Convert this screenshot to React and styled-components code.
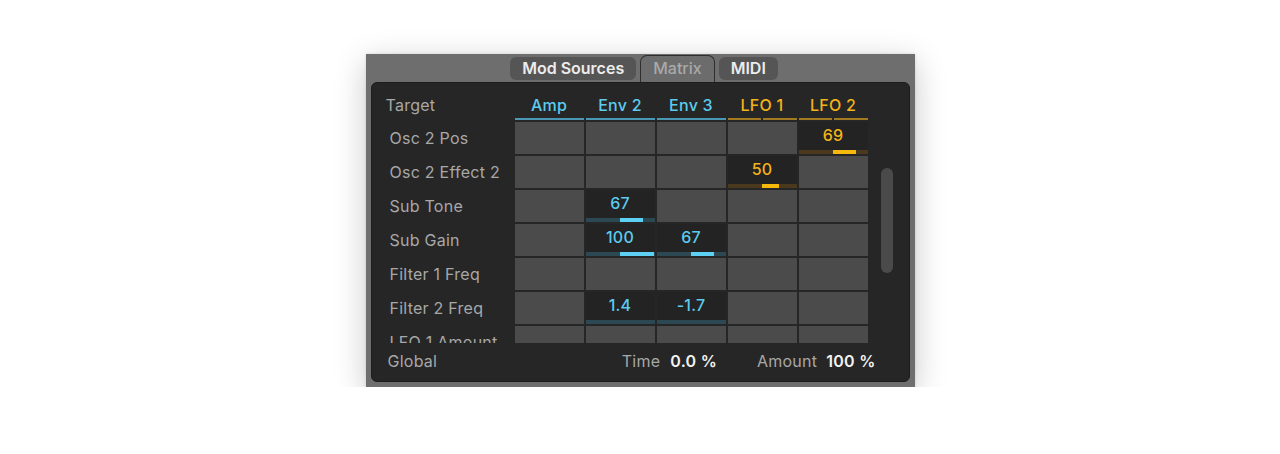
import React from "react";
import styled, { createGlobalStyle } from "styled-components";

const Global = createGlobalStyle`
  html, body { margin: 0; padding: 0; background: #ffffff; }
  body { font-family: Inter, "Noto Sans", "Liberation Sans", sans-serif; -webkit-font-smoothing: antialiased; }
  * { box-sizing: border-box; }
`;

const BLUE = { text: "#5ccbee", line: "#4a97b6", track: "#2c4852", fill: "#5dd0f3" };
const ORANGE = { text: "#f3b31a", line: "#a37a1f", track: "#4a391c", fill: "#f6b90b" };

const columns = [
  { name: "Amp", c: BLUE, split: false },
  { name: "Env 2", c: BLUE, split: false },
  { name: "Env 3", c: BLUE, split: false },
  { name: "LFO 1", c: ORANGE, split: true },
  { name: "LFO 2", c: ORANGE, split: true },
];

const rows = [
  { label: "Osc 2 Pos", values: { 4: 69 } },
  { label: "Osc 2 Effect 2", values: { 3: 50 } },
  { label: "Sub Tone", values: { 1: 67 } },
  { label: "Sub Gain", values: { 1: 100, 2: 67 } },
  { label: "Filter 1 Freq", values: {} },
  { label: "Filter 2 Freq", values: { 1: 1.4, 2: -1.7 } },
  { label: "LFO 1 Amount", values: {} },
];

const Page = styled.div`
  display: flex;
  justify-content: center;
  padding-top: 54px;
`;

const Device = styled.div`
  width: 549px;
  height: 333px;
  background: #6e6e6e;
  display: flex;
  flex-direction: column;
  padding: 0 5px 5px 5px;
  box-shadow: 0 8px 30px rgba(0, 0, 0, 0.22), 0 0 3px rgba(0, 0, 0, 0.12);
`;

const TabBar = styled.div`
  height: 28px;
  display: flex;
  align-items: flex-end;
  justify-content: center;
  gap: 4px;
  padding-left: 8px;
`;

const Tab = styled.div`
  font-size: 16px;
  font-weight: ${(p) => (p.$active ? 500 : 600)};
  color: ${(p) => (p.$active ? "#a9a9a9" : "#ececec")};
  background: ${(p) => (p.$active ? "#6c6c6c" : "#555555")};
  padding: 0 12px;
  line-height: 23px;
  height: ${(p) => (p.$active ? "27px" : "23px")};
  margin-bottom: ${(p) => (p.$active ? "0" : "2px")};
  border-radius: ${(p) => (p.$active ? "7px 7px 0 0" : "6px")};
  border: ${(p) => (p.$active ? "1px solid #2e2e2e" : "none")};
  border-bottom: none;
  padding-top: ${(p) => (p.$active ? "1px" : "0")};
`;

const Panel = styled.div`
  flex: 1;
  background: #262626;
  border: 1px solid #1d1d1d;
  border-radius: 6px;
  display: flex;
  flex-direction: column;
  overflow: hidden;
  letter-spacing: 0.25px;
`;

const GridRow = styled.div`
  display: grid;
  grid-template-columns: 141px repeat(5, 69px);
  column-gap: 2px;
  height: ${(p) => p.$h}px;
  flex-shrink: 0;
`;

const HeaderRow = styled(GridRow)`
  margin-top: 12px;
  margin-bottom: 2px;
`;

const TargetLabel = styled.div`
  padding-left: 14px;
  font-size: 16px;
  color: #a8a8a8;
  line-height: 20px;
`;

const HeadCell = styled.div`
  display: flex;
  flex-direction: column;
  justify-content: space-between;
`;

const HeadText = styled.div`
  text-align: center;
  font-size: 16px;
  font-weight: 500;
  line-height: 20px;
  color: ${(p) => p.$color};
`;

const Underline = styled.div`
  display: flex;
  gap: 2px;
  height: 2px;
`;

const UnderSeg = styled.div`
  flex: 1;
  background: ${(p) => p.$color};
`;

const Body = styled.div`
  display: flex;
  height: 221px;
  flex-shrink: 0;
`;

const RowList = styled.div`
  display: flex;
  flex-direction: column;
  gap: 2px;
  overflow: hidden;
  width: 496px;
`;

const RowLabel = styled.div`
  padding-left: 18px;
  font-size: 16px;
  color: #a8a8a8;
  line-height: 32px;
  white-space: nowrap;
`;

const Cell = styled.div`
  background: #4b4b4b;
`;

const ActiveCell = styled.div`
  background: #232323;
  display: flex;
  flex-direction: column;
`;

const Value = styled.div`
  flex: 1;
  display: flex;
  align-items: center;
  justify-content: center;
  font-size: 16px;
  font-weight: 500;
  color: ${(p) => p.$color};
  padding-bottom: 3px;
`;

const Track = styled.div`
  position: relative;
  height: 4px;
  background: ${(p) => p.$color};
`;

const Fill = styled.div`
  position: absolute;
  top: 0;
  bottom: 0;
  background: ${(p) => p.$color};
`;

const ScrollTrack = styled.div`
  flex: 1;
  display: flex;
  justify-content: flex-start;
  padding-left: 13px;
`;

const Thumb = styled.div`
  width: 12px;
  height: 105px;
  border-radius: 6px;
  background: #4a4a4a;
`;

const Footer = styled.div`
  flex: 1;
  display: flex;
  align-items: center;
  padding: 0 33px 2px 16px;
  font-size: 16px;
`;

const FootLabel = styled.span`
  color: #a8a8a8;
  margin-right: ${(p) => p.$mr || 0}px;
`;

const FootValue = styled.span`
  color: #f2f2f2;
  font-weight: 600;
  margin-right: ${(p) => p.$mr || 0}px;
`;

const Spacer = styled.div`
  flex: 1;
`;

function ValueCell({ value, c }) {
  const half = 34.5;
  const w = Math.floor((Math.abs(value) / 100) * half);
  const left = value >= 0 ? half : half - w;
  return (
    <ActiveCell>
      <Value $color={c.text}>{value}</Value>
      <Track $color={c.track}>
        {w > 0 && <Fill $color={c.fill} style={{ left: `${left}px`, width: `${w}px` }} />}
      </Track>
    </ActiveCell>
  );
}

export default function App() {
  return (
    <>
      <Global />
      <Page>
        <Device>
          <TabBar>
            <Tab>Mod Sources</Tab>
            <Tab $active>Matrix</Tab>
            <Tab>MIDI</Tab>
          </TabBar>
          <Panel>
            <HeaderRow $h={25}>
              <TargetLabel>Target</TargetLabel>
              {columns.map((col) => (
                <HeadCell key={col.name}>
                  <HeadText $color={col.c.text}>{col.name}</HeadText>
                  <Underline>
                    <UnderSeg $color={col.c.line} />
                    {col.split && <UnderSeg $color={col.c.line} />}
                  </Underline>
                </HeadCell>
              ))}
            </HeaderRow>
            <Body>
              <RowList>
                {rows.map((r) => (
                  <GridRow key={r.label} $h={32}>
                    <RowLabel>{r.label}</RowLabel>
                    {columns.map((col, i) =>
                      r.values[i] !== undefined ? (
                        <ValueCell key={i} value={r.values[i]} c={col.c} />
                      ) : (
                        <Cell key={i} />
                      )
                    )}
                  </GridRow>
                ))}
              </RowList>
              <ScrollTrack>
                <Thumb style={{ marginTop: "46px" }} />
              </ScrollTrack>
            </Body>
            <Footer>
              <FootLabel>Global</FootLabel>
              <Spacer />
              <FootLabel $mr={10}>Time</FootLabel>
              <FootValue $mr={40}>0.0 %</FootValue>
              <FootLabel $mr={9}>Amount</FootLabel>
              <FootValue>100 %</FootValue>
            </Footer>
          </Panel>
        </Device>
      </Page>
    </>
  );
}
